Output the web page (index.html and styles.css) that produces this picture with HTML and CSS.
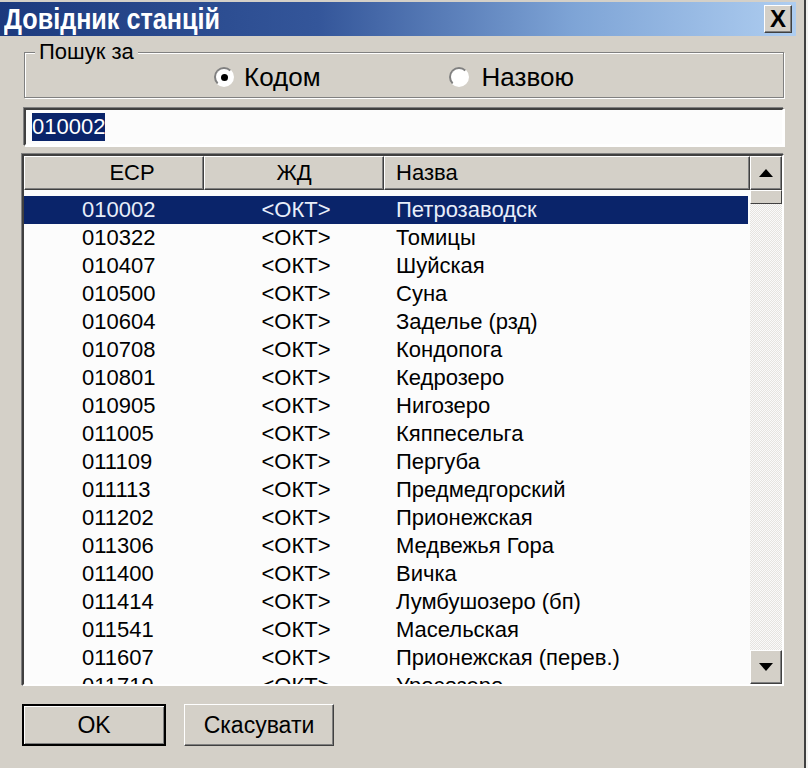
FILE: index.html
```html
<!DOCTYPE html>
<html lang="uk">
<head>
<meta charset="utf-8">
<title>Довідник станцій</title>
<link rel="stylesheet" href="styles.css">
</head>
<body>
<div class="window">
  <div class="titlebar">
    <span class="title">Довідник станцій</span>
    <span class="close">X</span>
  </div>
  <div class="content">
    <div class="group">
      <span class="legend">Пошук за</span>
      <label class="radio"><span class="dot checked"></span><span>Кодом</span></label>
      <label class="radio second"><span class="dot"></span><span>Назвою</span></label>
    </div>
    <div class="input"><span class="sel">010002</span></div>
    <div class="list">
      <div class="table">
        <div class="header">
          <div class="hcell h-esr">ЕСР</div>
          <div class="hcell h-zd">ЖД</div>
          <div class="hcell h-name">Назва</div>
        </div>
        <div class="rows">
          <div class="row selected"><span class="c-esr">010002</span><span class="c-zd">&lt;ОКТ&gt;</span><span class="c-name">Петрозаводск</span></div>
          <div class="row"><span class="c-esr">010322</span><span class="c-zd">&lt;ОКТ&gt;</span><span class="c-name">Томицы</span></div>
          <div class="row"><span class="c-esr">010407</span><span class="c-zd">&lt;ОКТ&gt;</span><span class="c-name">Шуйская</span></div>
          <div class="row"><span class="c-esr">010500</span><span class="c-zd">&lt;ОКТ&gt;</span><span class="c-name">Суна</span></div>
          <div class="row"><span class="c-esr">010604</span><span class="c-zd">&lt;ОКТ&gt;</span><span class="c-name">Заделье (рзд)</span></div>
          <div class="row"><span class="c-esr">010708</span><span class="c-zd">&lt;ОКТ&gt;</span><span class="c-name">Кондопога</span></div>
          <div class="row"><span class="c-esr">010801</span><span class="c-zd">&lt;ОКТ&gt;</span><span class="c-name">Кедрозеро</span></div>
          <div class="row"><span class="c-esr">010905</span><span class="c-zd">&lt;ОКТ&gt;</span><span class="c-name">Нигозеро</span></div>
          <div class="row"><span class="c-esr">011005</span><span class="c-zd">&lt;ОКТ&gt;</span><span class="c-name">Кяппесельга</span></div>
          <div class="row"><span class="c-esr">011109</span><span class="c-zd">&lt;ОКТ&gt;</span><span class="c-name">Пергуба</span></div>
          <div class="row"><span class="c-esr">011113</span><span class="c-zd">&lt;ОКТ&gt;</span><span class="c-name">Предмедгорский</span></div>
          <div class="row"><span class="c-esr">011202</span><span class="c-zd">&lt;ОКТ&gt;</span><span class="c-name">Прионежская</span></div>
          <div class="row"><span class="c-esr">011306</span><span class="c-zd">&lt;ОКТ&gt;</span><span class="c-name">Медвежья Гора</span></div>
          <div class="row"><span class="c-esr">011400</span><span class="c-zd">&lt;ОКТ&gt;</span><span class="c-name">Вичка</span></div>
          <div class="row"><span class="c-esr">011414</span><span class="c-zd">&lt;ОКТ&gt;</span><span class="c-name">Лумбушозеро (бп)</span></div>
          <div class="row"><span class="c-esr">011541</span><span class="c-zd">&lt;ОКТ&gt;</span><span class="c-name">Масельская</span></div>
          <div class="row"><span class="c-esr">011607</span><span class="c-zd">&lt;ОКТ&gt;</span><span class="c-name">Прионежская (перев.)</span></div>
          <div class="row"><span class="c-esr">011719</span><span class="c-zd">&lt;ОКТ&gt;</span><span class="c-name">Уросозеро</span></div>
        </div>
      </div>
      <div class="scrollbar">
        <div class="sbtn"><svg width="16" height="10" viewBox="0 0 16 10"><path d="M1 9 L8 1 L15 9 Z" fill="#000"/></svg></div>
        <div class="thumb"></div>
        <div class="track"></div>
        <div class="sbtn"><svg width="16" height="10" viewBox="0 0 16 10"><path d="M1 1 L8 9 L15 1 Z" fill="#000"/></svg></div>
      </div>
    </div>
    <div class="buttons">
      <div class="btn default">OK</div>
      <div class="btn cancel">Скасувати</div>
    </div>
  </div>
</div>
</body>
</html>
```
FILE: styles.css
```css
html, body {
  margin: 0;
  padding: 0;
}
body {
  width: 808px;
  height: 768px;
  overflow: hidden;
  background: #f2f2f0;
  font-family: "Liberation Sans", Arial, sans-serif;
  color: #000;
}
.window {
  width: 806px;
  height: 768px;
  box-sizing: border-box;
  background: #d4d0c8;
  border-right: 2px solid #404040;
  padding: 2px 8px 0 0;
  display: flex;
  flex-direction: column;
}
.titlebar {
  height: 34px;
  background: linear-gradient(to right, #1c3a7e 0%, #34569a 40%, #7ea4d6 72%, #aecdf0 100%);
  display: flex;
  align-items: center;
  justify-content: space-between;
  padding: 0 4px 0 4px;
}
.title {
  color: #fff;
  font-weight: bold;
  font-size: 30px;
  display: inline-block;
  transform: scaleX(0.84);
  transform-origin: left center;
  white-space: nowrap;
}
.close {
  width: 28px;
  height: 28px;
  box-sizing: border-box;
  background: #d4d0c8;
  border: 1px solid;
  border-color: #fff #404040 #404040 #fff;
  box-shadow: inset -1px -1px 0 #808080;
  font-size: 24px;
  font-weight: bold;
  line-height: 26px;
  text-align: center;
  color: #000;
}
.content {
  padding: 16px 0 0 24px;
  display: flex;
  flex-direction: column;
}
.group {
  position: relative;
  width: 760px;
  height: 46px;
  box-sizing: border-box;
  border: 1px solid #808080;
  box-shadow: inset 1px 1px 0 #fff, 1px 1px 0 #fff;
  display: flex;
  align-items: center;
  padding: 4px 0 0 189px;
  font-size: 26px;
}
.legend {
  position: absolute;
  left: 10px;
  top: -13px;
  padding: 0 4px;
  background: #d4d0c8;
  font-size: 22px;
  line-height: 24px;
}
.radio {
  display: flex;
  align-items: center;
  gap: 10px;
}
.radio.second {
  margin-left: 128px;
  gap: 13px;
}
.dot {
  width: 20px;
  height: 20px;
  box-sizing: border-box;
  border-radius: 50%;
  background: #fff;
  border: 2px solid;
  border-color: #808080 #fff #fff #808080;
  display: flex;
  align-items: center;
  justify-content: center;
}
.dot.checked::after {
  content: "";
  width: 7px;
  height: 7px;
  border-radius: 50%;
  background: #000;
}
.input {
  margin-top: 10px;
  width: 760px;
  height: 38px;
  box-sizing: border-box;
  background: #fcfcfc;
  border: 2px solid;
  border-color: #404040 #fff #fff #404040;
  box-shadow: 1px 1px 0 #fff, -1px -1px 0 #808080;
  display: flex;
  align-items: center;
  padding-left: 6px;
  font-size: 22px;
}
.sel {
  background: #0a246a;
  color: #fff;
  line-height: 28px;
}
.list {
  margin-top: 8px;
  margin-left: -2px;
  width: 762px;
  height: 532px;
  box-sizing: border-box;
  border: 2px solid;
  border-color: #404040 #fff #fff #404040;
  box-shadow: -1px -1px 0 #808080;
  background: #fcfcfc;
  display: flex;
  overflow: hidden;
}
.table {
  width: 726px;
  display: flex;
  flex-direction: column;
  overflow: hidden;
}
.header {
  display: grid;
  grid-template-columns: 180px 180px 1fr;
  height: 34px;
  flex-shrink: 0;
}
.hcell {
  background: #d4d0c8;
  box-sizing: border-box;
  border: 1px solid;
  border-color: #fff #404040 #404040 #fff;
  box-shadow: inset -1px -1px 0 #808080;
  display: flex;
  align-items: center;
  font-size: 22px;
}
.h-esr {
  justify-content: center;
  padding-left: 36px;
}
.h-zd {
  justify-content: center;
}
.h-name {
  padding-left: 11px;
}
.rows {
  padding-top: 6px;
  display: flex;
  flex-direction: column;
}
.row {
  display: grid;
  grid-template-columns: 180px 180px 1fr;
  height: 28px;
  align-items: center;
  font-size: 22px;
  margin-right: 2px;
  flex-shrink: 0;
}
.row.selected {
  background: #0a246a;
  color: #e8eefa;
}
.c-esr {
  padding-left: 58px;
}
.c-zd {
  text-align: center;
  padding-left: 4px;
}
.c-name {
  padding-left: 12px;
  white-space: nowrap;
}
.scrollbar {
  width: 32px;
  display: flex;
  flex-direction: column;
  background: repeating-conic-gradient(#e6e4e0 0 25%, #fafafa 0 50%) 0 0 / 2px 2px;
}
.sbtn {
  height: 34px;
  flex-shrink: 0;
  box-sizing: border-box;
  background: #d4d0c8;
  border: 1px solid;
  border-color: #fff #404040 #404040 #fff;
  box-shadow: inset -1px -1px 0 #808080;
  display: flex;
  align-items: center;
  justify-content: center;
}
.thumb {
  height: 14px;
  flex-shrink: 0;
  box-sizing: border-box;
  background: #d4d0c8;
  border: 1px solid;
  border-color: #fff #404040 #404040 #fff;
}
.track {
  flex: 1;
}
.buttons {
  margin-top: 18px;
  margin-left: -2px;
  display: flex;
  gap: 18px;
}
.btn {
  height: 42px;
  box-sizing: border-box;
  background: #d4d0c8;
  border: 1px solid;
  border-color: #fff #404040 #404040 #fff;
  box-shadow: inset -1px -1px 0 #808080;
  display: flex;
  align-items: center;
  justify-content: center;
  font-size: 23px;
}
.btn.default {
  width: 144px;
  border: 2px solid #000;
  box-shadow: inset 1px 1px 0 #fff, inset -1px -1px 0 #808080;
}
.btn.cancel {
  width: 150px;
}
```
